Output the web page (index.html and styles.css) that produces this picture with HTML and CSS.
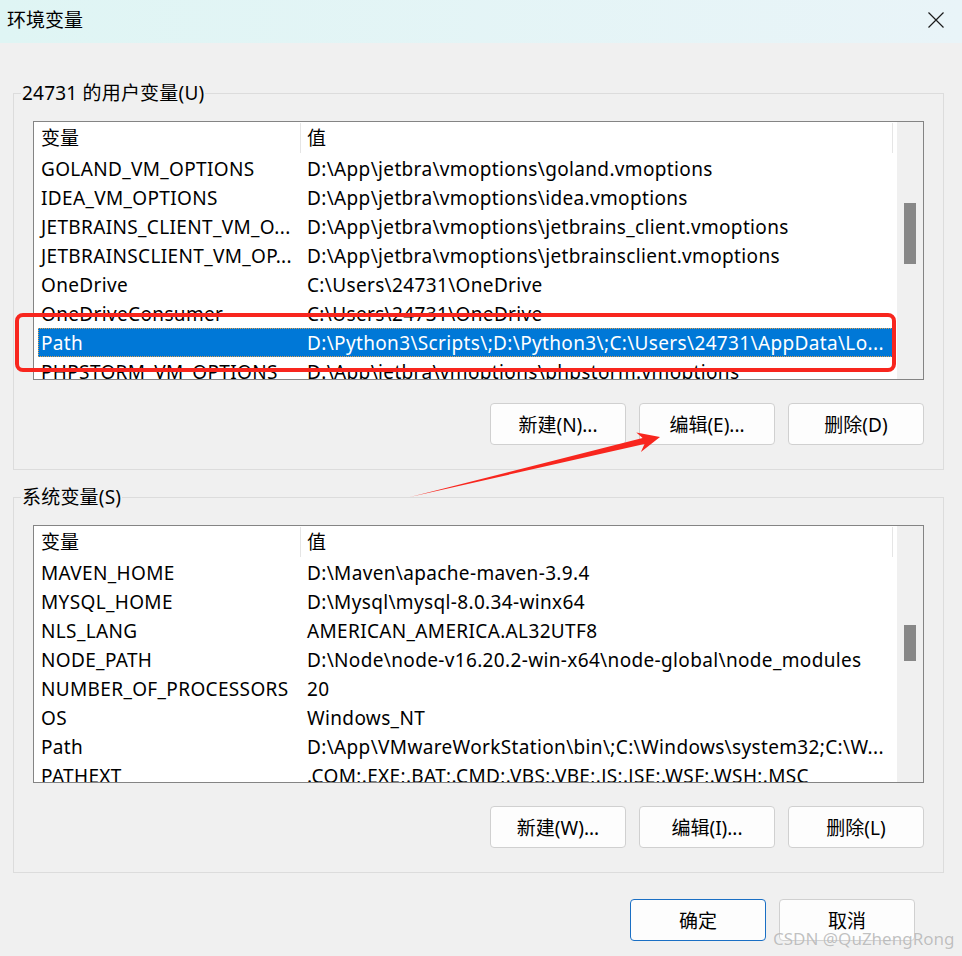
FILE: index.html
```html
<!DOCTYPE html>
<html lang="zh-CN">
  <head>
    <meta charset="UTF-8" />
    <meta name="viewport" content="width=device-width, initial-scale=1.0" />
    <title>环境变量</title>
    <link rel="stylesheet" href="styles.css">
  </head>
  <body>
    <div class="dialog">
      <div class="title-bar">
        <span class="title">环境变量</span>
        <span class="close">
          <svg width="16" height="16" viewBox="0 0 16 16">
            <path d="M0.5 0.5 L15.5 15.5 M15.5 0.5 L0.5 15.5" stroke="#1b1b1b" stroke-width="1.2" fill="none" />
          </svg>
        </span>
      </div>

      <div class="dialog-body">
        <fieldset class="group">
          <legend>24731 的用户变量(U)</legend>
          <div class="group-inner">
            <div class="list">
              <div class="list-content">
                <div class="list-head">
                  <div class="col-name">变量</div>
                  <div class="col-value">值</div>
                </div>
                <div class="list-row"><div class="col-name">GOLAND_VM_OPTIONS</div><div class="col-value">D:\App\jetbra\vmoptions\goland.vmoptions</div></div>
                <div class="list-row"><div class="col-name">IDEA_VM_OPTIONS</div><div class="col-value">D:\App\jetbra\vmoptions\idea.vmoptions</div></div>
                <div class="list-row"><div class="col-name">JETBRAINS_CLIENT_VM_O...</div><div class="col-value">D:\App\jetbra\vmoptions\jetbrains_client.vmoptions</div></div>
                <div class="list-row"><div class="col-name">JETBRAINSCLIENT_VM_OP...</div><div class="col-value">D:\App\jetbra\vmoptions\jetbrainsclient.vmoptions</div></div>
                <div class="list-row"><div class="col-name">OneDrive</div><div class="col-value">C:\Users\24731\OneDrive</div></div>
                <div class="list-row"><div class="col-name">OneDriveConsumer</div><div class="col-value">C:\Users\24731\OneDrive</div></div>
                <div class="list-row selected"><div class="col-name">Path</div><div class="col-value">D:\Python3\Scripts\;D:\Python3\;C:\Users\24731\AppData\Lo...</div></div>
                <div class="list-row"><div class="col-name">PHPSTORM_VM_OPTIONS</div><div class="col-value">D:\App\jetbra\vmoptions\phpstorm.vmoptions</div></div>
              </div>
              <div class="scrollbar"><div class="thumb thumb-user"></div></div>
            </div>
            <div class="button-row">
              <button class="btn">新建(N)...</button>
              <button class="btn">编辑(E)...</button>
              <button class="btn">删除(D)</button>
            </div>
          </div>
        </fieldset>

        <fieldset class="group group-system">
          <legend>系统变量(S)</legend>
          <div class="group-inner">
            <div class="list list-system">
              <div class="list-content">
                <div class="list-head">
                  <div class="col-name">变量</div>
                  <div class="col-value">值</div>
                </div>
                <div class="list-row"><div class="col-name">MAVEN_HOME</div><div class="col-value">D:\Maven\apache-maven-3.9.4</div></div>
                <div class="list-row"><div class="col-name">MYSQL_HOME</div><div class="col-value">D:\Mysql\mysql-8.0.34-winx64</div></div>
                <div class="list-row"><div class="col-name">NLS_LANG</div><div class="col-value">AMERICAN_AMERICA.AL32UTF8</div></div>
                <div class="list-row"><div class="col-name">NODE_PATH</div><div class="col-value">D:\Node\node-v16.20.2-win-x64\node-global\node_modules</div></div>
                <div class="list-row"><div class="col-name">NUMBER_OF_PROCESSORS</div><div class="col-value">20</div></div>
                <div class="list-row"><div class="col-name">OS</div><div class="col-value">Windows_NT</div></div>
                <div class="list-row"><div class="col-name">Path</div><div class="col-value">D:\App\VMwareWorkStation\bin\;C:\Windows\system32;C:\W...</div></div>
                <div class="list-row"><div class="col-name">PATHEXT</div><div class="col-value">.COM;.EXE;.BAT;.CMD;.VBS;.VBE;.JS;.JSE;.WSF;.WSH;.MSC</div></div>
              </div>
              <div class="scrollbar"><div class="thumb thumb-system"></div></div>
            </div>
            <div class="button-row">
              <button class="btn">新建(W)...</button>
              <button class="btn">编辑(I)...</button>
              <button class="btn">删除(L)</button>
            </div>
          </div>
        </fieldset>

        <div class="dialog-buttons">
          <button class="btn btn-default">确定</button>
          <button class="btn">取消</button>
        </div>
      </div>

      <!-- red annotation drawn over the screenshot -->
      <svg class="annotation" width="962" height="956" viewBox="0 0 962 956">
        <rect x="17" y="315" width="877" height="55" rx="6" ry="6" fill="none" stroke="#f8261e" stroke-width="4" />
        <polygon points="410,497 644.5,444 640.9,452 660,437 636.3,432.4 642.6,438" fill="#f8261e" />
      </svg>

      <div class="watermark">CSDN @QuZhengRong</div>
    </div>
  </body>
</html>
```

FILE: styles.css
```css
body {
  margin: 0;
  background-color: #f0f0f0;
  font-family: "Noto Sans", "Noto Sans CJK SC", sans-serif;
  font-size: 19px;
  color: #000;
}

.dialog {
  position: relative;
  width: 962px;
  height: 956px;
  overflow: hidden;
}

.title-bar {
  height: 43px;
  box-sizing: border-box;
  display: flex;
  align-items: center;
  justify-content: space-between;
  padding: 0 18px 3px 7px;
  background: linear-gradient(90deg, #dff5f4, #e9f4f8);
}

.title {
  line-height: 1;
}

.close {
  display: flex;
}

.dialog-body {
  padding: 38px 18px 0 13px;
}

.group {
  margin: 0;
  padding: 0;
  min-width: 0;
  border: 1px solid #dcdcdc;
}

.group legend {
  margin-left: 7px;
  padding: 0 1px;
  line-height: 24px;
  letter-spacing: 0.2px;
}

.group-system {
  margin-top: 15px;
}

.group-inner {
  padding: 16px 19px 24px;
}

.list {
  display: flex;
  height: 259px;
  box-sizing: border-box;
  border: 1px solid #848484;
  background-color: #fff;
}

.list-system {
  height: 258px;
}

.list-content {
  flex: 1;
  min-width: 0;
  overflow: hidden;
  padding: 0 4px;
}

.list-head,
.list-row {
  display: flex;
  align-items: center;
  white-space: nowrap;
}

.list-head {
  height: 32px;
}

.list-row {
  height: 29px;
  letter-spacing: 0.35px;
}

.col-name {
  width: 263px;
  flex-shrink: 0;
  box-sizing: border-box;
  padding-left: 3px;
  overflow: hidden;
}

.col-value {
  flex: 1;
  min-width: 0;
  padding-left: 6px;
  overflow: hidden;
}

.list-head .col-name,
.list-head .col-value {
  height: 30px;
  line-height: 30px;
}

.list-head .col-name {
  border-right: 1px solid #e5e5e5;
}

.list-head .col-value {
  border-right: 1px solid #e5e5e5;
}

.list-row.selected {
  background-color: #0078d7;
  color: #fff;
  outline: 1px dotted #e0a050;
  outline-offset: -1px;
}

.scrollbar {
  width: 12px;
  padding: 0 7px;
  background-color: #f0f0f0;
}

.thumb {
  background-color: #888;
}

.thumb-user {
  margin-top: 81px;
  height: 61px;
}

.thumb-system {
  margin-top: 99px;
  height: 36px;
}

.button-row {
  display: flex;
  justify-content: flex-end;
  gap: 13px;
  margin-top: 23px;
}

.btn {
  width: 136px;
  height: 42px;
  border: 1px solid #d0d0d0;
  border-radius: 4px;
  background-color: #fdfdfd;
  font-family: inherit;
  font-size: 19px;
  color: #000;
  padding: 0;
}

.btn-default {
  border-color: #1a6fc4;
}

.dialog-buttons {
  display: flex;
  justify-content: flex-end;
  gap: 13px;
  margin-top: 26px;
  padding-right: 29px;
}

.annotation {
  position: absolute;
  top: 0;
  left: 0;
  pointer-events: none;
}

.watermark {
  position: absolute;
  left: 773px;
  top: 927px;
  font-size: 17px;
  color: rgba(140, 140, 140, 0.55);
  text-shadow: 0 0 1px rgba(255, 255, 255, 0.8);
  white-space: nowrap;
}
```
